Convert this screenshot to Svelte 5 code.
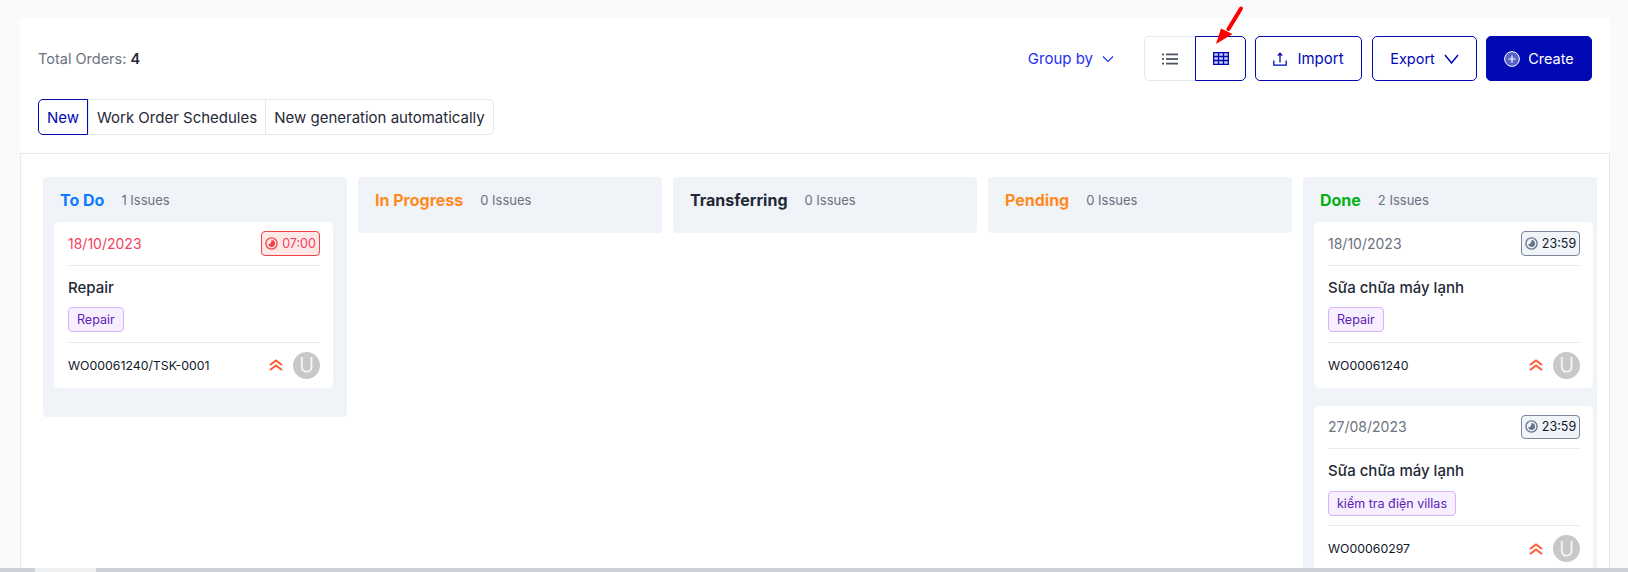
<script>
  const columns = [
    { name: 'To Do', color: '#0d7bfb', issues: '1 Issues', cards: [
      { date: '18/10/2023', time: '07:00', late: true, title: 'Repair', tag: 'Repair', code: 'WO00061240/TSK-0001' }
    ] },
    { name: 'In Progress', color: '#ff8a1f', issues: '0 Issues', cards: [] },
    { name: 'Transferring', color: '#1f2937', issues: '0 Issues', cards: [] },
    { name: 'Pending', color: '#ff8a1f', issues: '0 Issues', cards: [] },
    { name: 'Done', color: '#00b218', issues: '2 Issues', cards: [
      { date: '18/10/2023', time: '23:59', late: false, title: 'Sữa chữa máy lạnh', tag: 'Repair', code: 'WO00061240' },
      { date: '27/08/2023', time: '23:59', late: false, title: 'Sữa chữa máy lạnh', tag: 'kiểm tra điện villas', code: 'WO00060297' }
    ] }
  ];
</script>

<div class="page">
  <main class="panel">
    <header class="head">
      <div class="top">
        <p class="total">Total Orders: <b>4</b></p>
        <button class="group">Group by
          <svg width="12" height="12" viewBox="0 0 12 12" fill="none" stroke="currentColor" stroke-width="1.1"><path d="M1 3.5 6 8.5l5-5"/></svg>
        </button>
        <div class="views">
          <button class="view" aria-label="List">
            <svg width="16" height="12" viewBox="0 0 16 12" fill="#4b5563"><rect x="0" y="0.5" width="2" height="1.8"/><rect x="4" y="0.5" width="12" height="1.8"/><rect x="0" y="5.1" width="2" height="1.8"/><rect x="4" y="5.1" width="12" height="1.8"/><rect x="0" y="9.7" width="2" height="1.8"/><rect x="4" y="9.7" width="12" height="1.8"/></svg>
          </button>
          <button class="view on" aria-label="Table">
            <svg width="16" height="13" viewBox="0 0 16 13" fill="none" stroke="#0009b3" stroke-width="1.3"><rect x="0.65" y="0.65" width="14.7" height="11.7" fill="#c9cdf0"/><path d="M5.5.6v11.8M10.5.6v11.8M.6 4.5h14.8M.6 8.5h14.8"/></svg>
          </button>
        </div>
        <button class="btn import">
          <svg width="14" height="14" viewBox="0 0 14 14" fill="none" stroke="currentColor" stroke-width="1.3"><path d="M.8 8.5v4.6h12.4V8.5M7 10.5V1.5M4.8 3.6 7 1.3l2.2 2.3"/></svg>
          Import
        </button>
        <button class="btn export">Export
          <svg width="15" height="10" viewBox="0 0 15 10" fill="none" stroke="currentColor" stroke-width="1.5"><path d="M1 1l6.5 8L14 1"/></svg>
        </button>
        <button class="btn create">
          <svg width="16" height="16" viewBox="0 0 16 16" fill="none" stroke="#fff" stroke-width="1"><circle cx="8" cy="8" r="7.4" fill="#5a60cc"/><path d="M8 4.5v7M4.5 8h7" stroke-width="1.2"/></svg>
          Create
        </button>
      </div>
      <div class="tabs">
        <button class="tab active">New</button>
        <button class="tab">Work Order Schedules</button>
        <button class="tab">New generation automatically</button>
      </div>
    </header>

    <section class="board">
      <div class="columns">
        {#each columns as col}
          <article class="col" class:filled={col.cards.length > 0}>
            <h2 class="col-head">
              <span class="col-name" style="color:{col.color}">{col.name}</span>
              <span class="col-count">{col.issues}</span>
            </h2>
            {#each col.cards as card}
              <div class="card">
                <div class="row date-row">
                  <span class="date" class:late={card.late}>{card.date}</span>
                  <span class="time" class:late={card.late}>
                    <svg width="13" height="13" viewBox="0 0 13 13"><circle cx="6.5" cy="6.5" r="5.6" fill="none" stroke="currentColor" stroke-width="1.3"/><path d="M6.5 3a3.5 3.5 0 1 1-3.4 4.3C5.2 7.6 6.6 5.6 6.5 3z" fill="currentColor"/></svg>
                    <span class="clock">{card.time}</span>
                  </span>
                </div>
                <div class="body">
                  <h3 class="title">{card.title}</h3>
                  <span class="tag">{card.tag}</span>
                </div>
                <div class="row foot">
                  <span class="code">{card.code}</span>
                  <svg class="prio" width="14" height="12" viewBox="0 0 14 12" fill="none" stroke="#ff5a36" stroke-width="2"><path d="M1 6l6-4.5L13 6M1 11l6-4.5L13 11"/></svg>
                  <span class="avatar">U</span>
                </div>
              </div>
            {/each}
          </article>
        {/each}
      </div>
    </section>
  </main>
  <div class="scrollbar"><div class="thumb"></div></div>

  <svg class="arrow" width="34" height="42" viewBox="0 0 34 42" aria-hidden="true">
    <path d="M28 3.5 15.5 24" stroke="#f00" stroke-width="4" stroke-linecap="round"/>
    <path d="M3 39 8 23.5 19.5 29z" fill="#f00"/>
  </svg>
</div>

<style>
  :global(body) { margin: 0; background: #f9fafb; }
  * { box-sizing: border-box; }
  .page {
    position: relative;
    height: 572px;
    display: flex;
    flex-direction: column;
    overflow: hidden;
    font-family: Inter, "Noto Sans", sans-serif;
    font-size: 14px;
    color: #1f2937;
  }
  button { font: inherit; background: none; border: 0; padding: 0; cursor: pointer; }
  .panel {
    flex: 1;
    min-height: 0;
    margin: 18px 18px 0 20px;
    background: #fff;
    display: flex;
    flex-direction: column;
  }
  .head { height: 135px; padding: 18px 18px 0 18px; flex: none; }
  .top { display: flex; align-items: center; height: 45px; }
  .total { margin: 0 auto 0 0; color: #6b7280; font-size: 14.5px; }
  .total b { color: #1f2937; font-weight: 600; }
  .group {
    display: flex; align-items: center; gap: 9px;
    color: #1f2ff0; font-size: 15px; margin-right: 30px;
  }
  .views { display: flex; height: 45px; margin-right: 9px; }
  .view {
    width: 51px; display: flex; align-items: center; justify-content: center;
    border: 1px solid #e2e8f0; border-right: 0; border-radius: 5px 0 0 5px;
  }
  .view.on { border: 1px solid #0009b3; border-radius: 0 5px 5px 0; }
  .btn {
    height: 45px; display: flex; align-items: center; justify-content: center;
    border: 1px solid #0009b3; border-radius: 5px; color: #0009b3; font-size: 14.5px;
  }
  .import { width: 107px; gap: 10px; margin-right: 10px; font-size: 15px; }
  .export { width: 105px; gap: 9px; margin-right: 9px; }
  .create { width: 106px; gap: 8px; background: #0009b3; color: #fff; }
  .tabs { display: inline-flex; height: 36px; margin-top: 18px; border: 1px solid #e2e8f0; border-radius: 5px; }
  .tab { padding: 0 8px; font-size: 15px; color: #1f2937; border-left: 1px solid #e2e8f0; }
  .tab:first-child { border-left: 0; }
  .tab.active {
    margin: -1px 0 -1px -1px; width: 50px; padding: 0;
    border: 1px solid #0009b3; border-radius: 5px 0 0 5px; color: #0009b3;
  }
  .board {
    flex: 1; min-height: 0;
    border: 1px solid #e2e8f0; border-bottom: 0;
    padding: 23px 12px 0 22px;
  }
  .columns { display: flex; align-items: flex-start; gap: 11px; overflow: hidden; height: 100%; }
  .col {
    flex: none; width: 304px; background: #f0f3f8; border-radius: 4px;
    padding: 0 14px 0 11px; min-height: 56px;
  }
  .col.filled { padding-bottom: 29px; }
  .col-head { margin: 0; height: 45px; display: flex; align-items: center; gap: 17px; padding-left: 6px; font-size: 13px; font-weight: 400; }
  .col-name { font-size: 16px; font-weight: 700; }
  .col-count { color: #6b7280; }
  .card { background: #fff; border-radius: 5px; padding: 0 13px 0 14px; height: 165.6px; }
  .card + .card { margin-top: 18px; }
  .row { display: flex; align-items: center; }
  .date-row { height: 43.5px; border-bottom: 1px solid #e9edf3; justify-content: space-between; }
  .date { color: #6b7280; }
  .date.late { color: #f43f5e; }
  .time {
    display: flex; align-items: center; gap: 4px;
    height: 24.5px; width: 59px; justify-content: center;
    border: 1px solid #7a8599; border-radius: 4px; background: #f0f3f8; color: #64748b;
    font-size: 12.5px;
  }
  .clock { color: #111827; }
  .time.late { border-color: #ef4444; background: #fee7e7; color: #ef4444; }
  .time.late .clock { color: #f43f5e; }
  .body { height: 77.4px; padding-top: 12.2px; border-bottom: 1px solid #e9edf3; }
  .title { margin: 0 0 10.8px; font-size: 15px; font-weight: 500; line-height: 19px; color: #1f2937; }
  .tag {
    display: inline-flex; align-items: center; height: 25px; padding: 0 8px;
    background: #f7efff; border: 1px solid #d8b4fe; border-radius: 4px;
    color: #5b21b6; font-size: 12.5px;
  }
  .foot { height: 44.7px; }
  .code { margin-right: auto; color: #111827; font-size: 12.3px; }
  .prio { margin-right: 10px; }
  .avatar {
    width: 27px; height: 27px; border-radius: 50%; background: #c8c8c8; color: #fff;
    display: flex; align-items: center; justify-content: center; font-size: 20px; font-weight: 300;
  }
  .scrollbar { flex: none; height: 4px; background: #cbd0d9; }
  .thumb { width: 61px; height: 4px; margin-left: 35px; background: #eeeff1; }
  .arrow { position: absolute; left: 1213px; top: 5px; }
</style>
